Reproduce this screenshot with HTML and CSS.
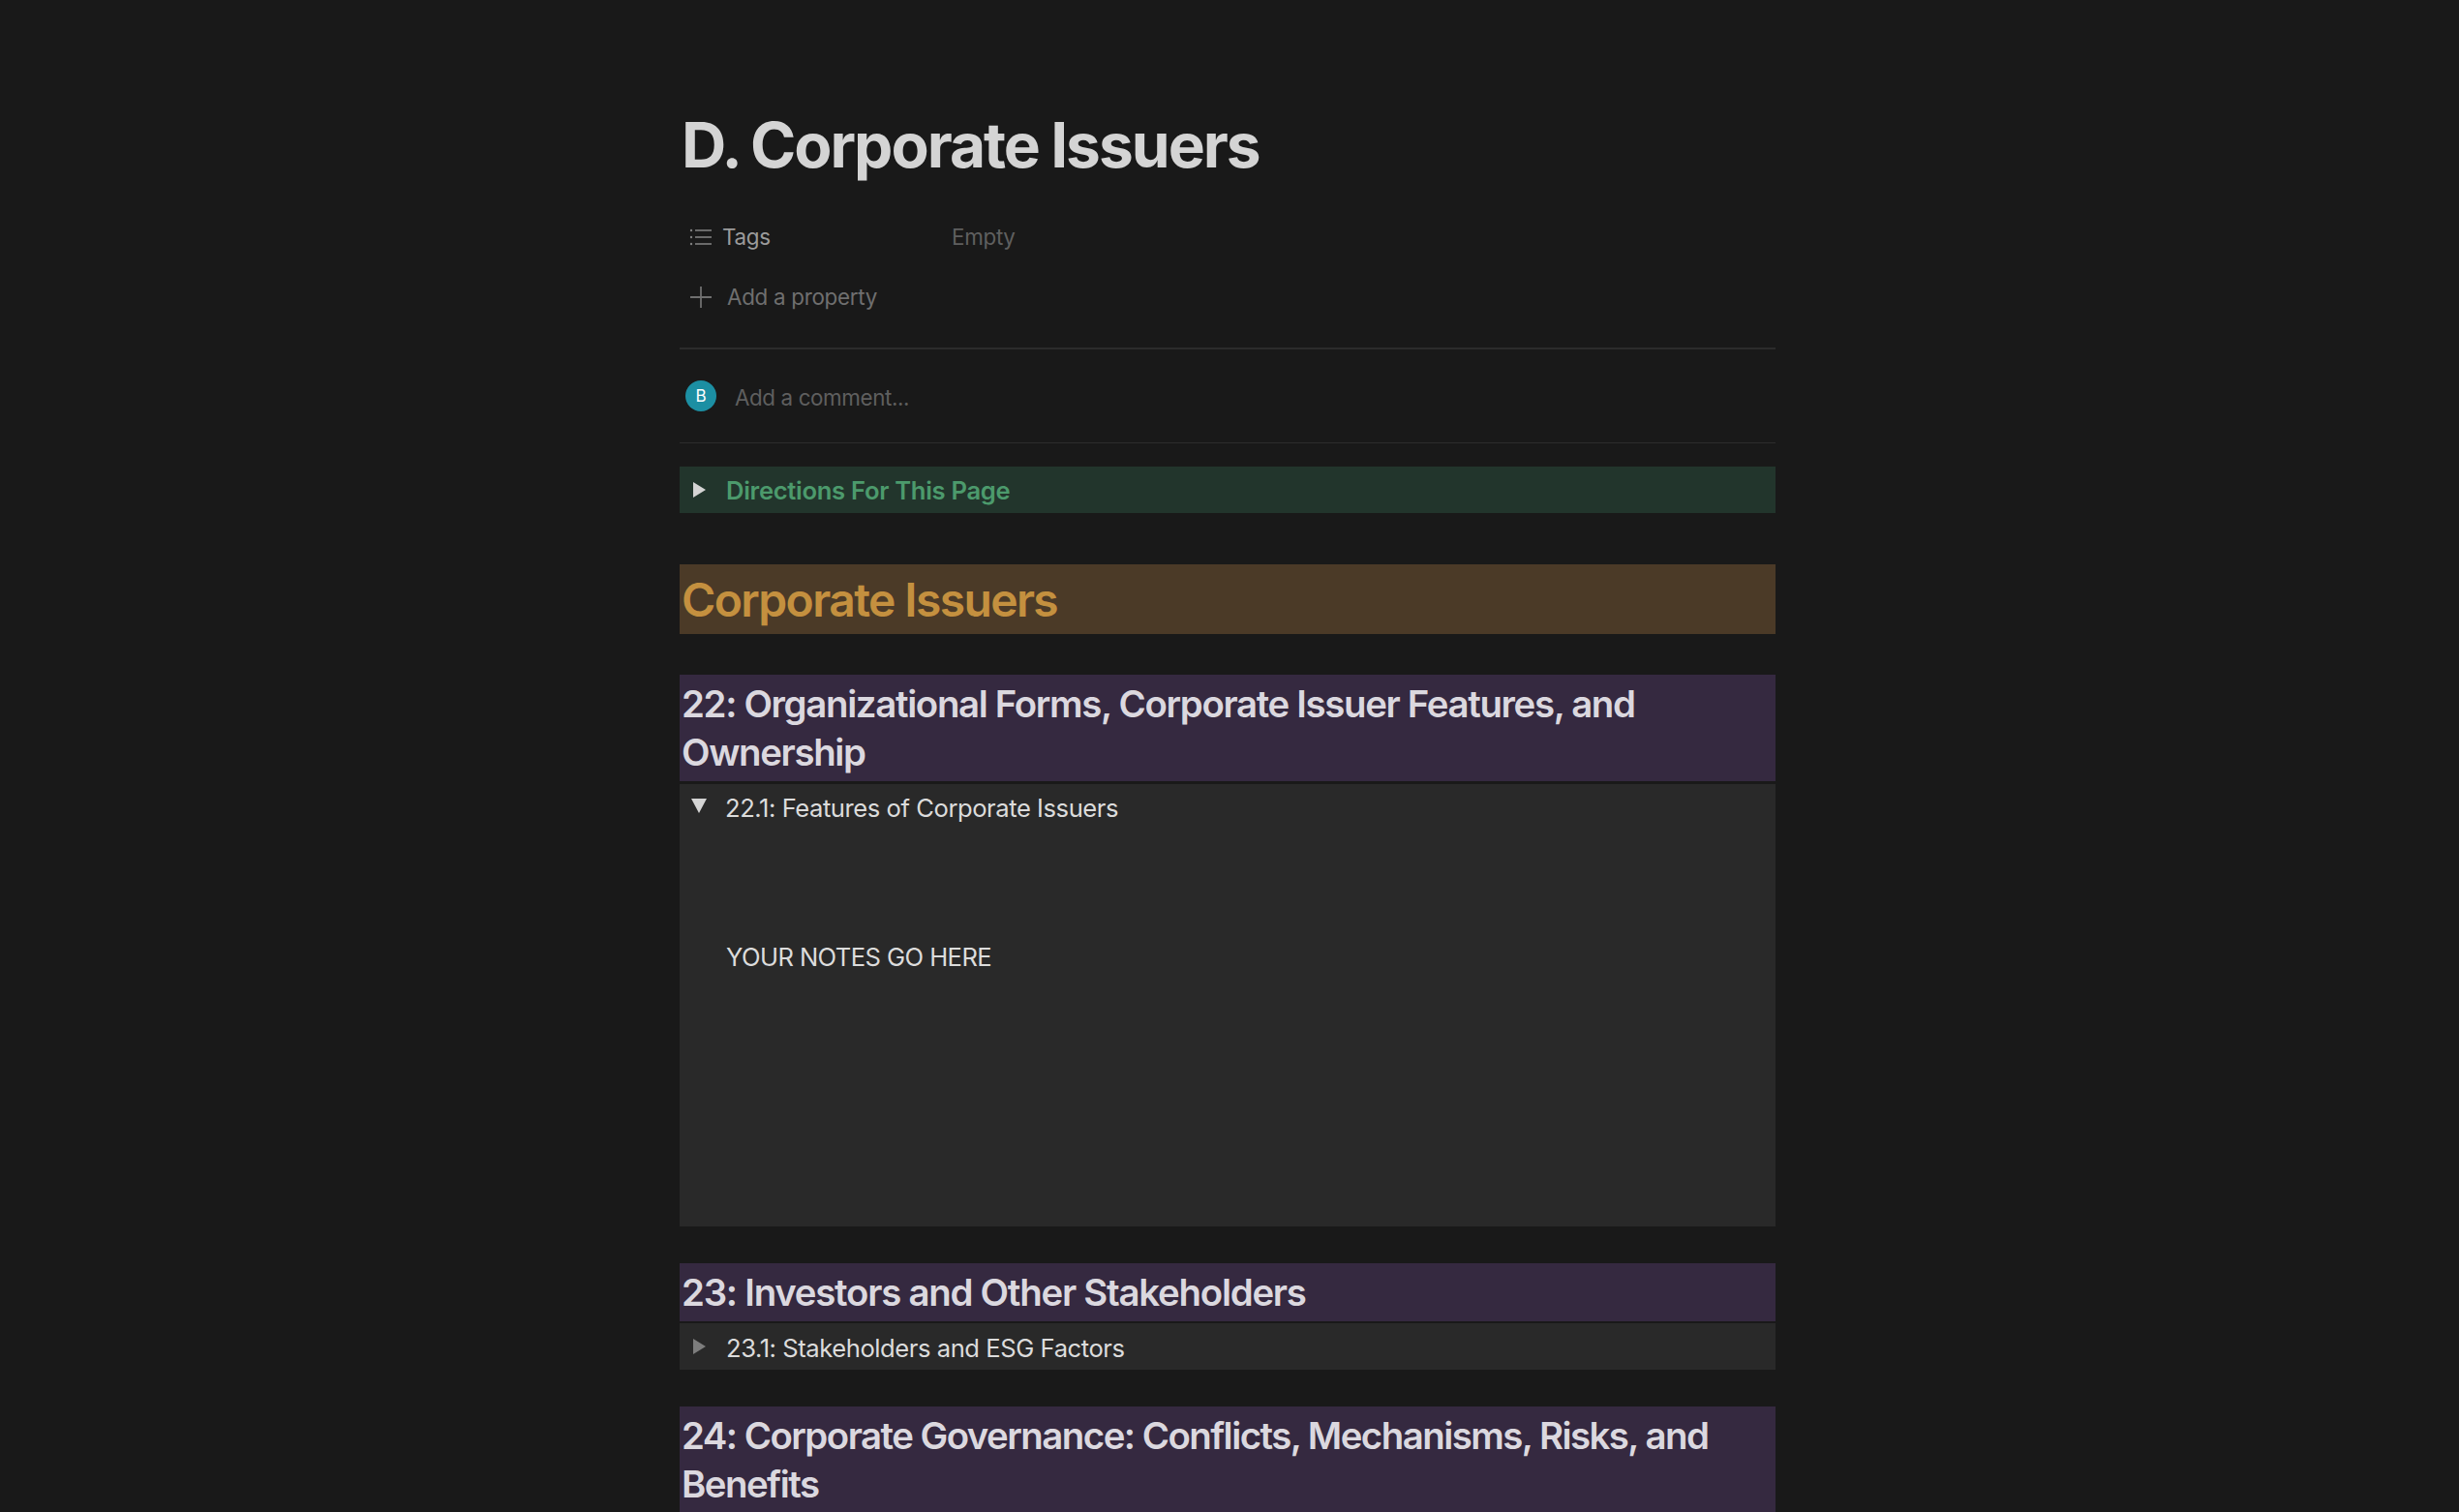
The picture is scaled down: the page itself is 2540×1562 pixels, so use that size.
FILE: index.html
```html
<!DOCTYPE html>
<html lang="en">
<head>
  <meta charset="UTF-8">
  <title>D. Corporate Issuers</title>
  <link rel="stylesheet" href="styles.css">
</head>
<body>
  <div class="page">
    <!-- Page header -->
    <h1 class="page-title">D. Corporate Issuers</h1>

    <div class="property">
      <svg class="prop-icon" viewBox="0 0 24 24" width="24" height="24">
        <g fill="#7f7f7f">
          <circle cx="2" cy="5" r="1.2"/><circle cx="2" cy="12" r="1.2"/><circle cx="2" cy="19" r="1.2"/>
          <rect x="6" y="4.2" width="17" height="1.6"/><rect x="6" y="11.2" width="17" height="1.6"/><rect x="6" y="18.2" width="17" height="1.6"/>
        </g>
      </svg>
      <span class="prop-name">Tags</span>
      <span class="prop-value">Empty</span>
    </div>
    <div class="add-property">
      <svg class="prop-icon" viewBox="0 0 24 24" width="24" height="24">
        <path d="M12 1v22M1 12h22" stroke="#6f6f6f" stroke-width="1.8" fill="none"/>
      </svg>
      <span>Add a property</span>
    </div>

    <!-- Comments -->
    <div class="comment-row">
      <div class="avatar">B</div>
      <span class="comment-text">Add a comment...</span>
    </div>

    <!-- Content -->
    <div class="callout-toggle">
      <span class="tri tri-light"></span>
      <span class="row-label">Directions For This Page</span>
    </div>

    <h1 class="heading-main">Corporate Issuers</h1>

    <h2 class="heading-sec">22: Organizational Forms, Corporate Issuer Features, and Ownership</h2>
    <div class="toggle-block open">
      <div class="toggle-row">
        <span class="tri tri-down"></span>
        <span class="row-label">22.1: Features of Corporate Issuers</span>
      </div>
      <p class="notes">YOUR NOTES GO HERE</p>
    </div>

    <h2 class="heading-sec wide">23: Investors and Other Stakeholders</h2>
    <div class="toggle-block">
      <div class="toggle-row">
        <span class="tri tri-grey"></span>
        <span class="row-label">23.1: Stakeholders and ESG Factors</span>
      </div>
    </div>

    <h2 class="heading-sec tight">24: Corporate Governance: Conflicts, Mechanisms, Risks, and Benefits</h2>
  </div>
</body>
</html>
```

FILE: styles.css
```css
/* General Styles */
html, body {
  height: 100%;
}

body {
  margin: 0;
  overflow: hidden;
  background-color: #191919;
  font-family: 'Inter', sans-serif;
  font-size: 25.6px;
  line-height: 1.5;
  color: #dcdcdc;
}

.page {
  width: 1132px;
  margin-left: 702px;
}

/* Page header */
.page-title {
  margin: 0;
  padding: 106px 2px 0;
  font-size: 64px;
  font-weight: 700;
  line-height: 88px;
  letter-spacing: -2px;
  word-spacing: -1px;
  color: #d4d4d4;
}

.property, .add-property {
  display: flex;
  align-items: center;
  font-size: 22.4px;
  letter-spacing: -0.3px;
  height: 48px;
}

.property {
  margin-top: 27px;
}

.add-property {
  margin-top: 14px;
  padding-bottom: 28px;
  border-bottom: 2px solid #2c2c2c;
  color: #7a7a7a;
}

.prop-icon {
  margin-left: 10px;
  flex-shrink: 0;
}

.prop-name {
  margin-left: 10px;
  width: 237px;
  color: #9b9b9b;
}

.prop-value {
  color: #5f5f5f;
}

.add-property span {
  margin-left: 15px;
  color: #6f6f6f;
}

.comment-row {
  display: flex;
  align-items: center;
  height: 96px;
  border-bottom: 1px solid #2c2c2c;
  font-size: 22.4px;
  letter-spacing: -0.4px;
  color: #5f5f5f;
}

.comment-text {
  padding-top: 3px;
}

.avatar {
  width: 32px;
  height: 32px;
  margin-left: 6px;
  margin-right: 19px;
  margin-top: -1px;
  border-radius: 50%;
  background-color: #1c8fa3;
  color: #fff;
  font-size: 17px;
  letter-spacing: 0;
  line-height: 32px;
  text-align: center;
}

/* Toggle triangles */
.tri {
  display: block;
  width: 0;
  height: 0;
  margin-left: 14px;
  margin-right: 21px;
  flex-shrink: 0;
  border-style: solid;
  border-width: 8px 0 8px 13px;
  border-color: transparent transparent transparent #d4d4d4;
}

.tri-grey {
  border-left-color: #7d7d7d;
}

.tri-down {
  margin-left: 12px;
  margin-right: 19px;
  margin-top: -2px;
  border-width: 15px 8px 0 8px;
  border-color: #d4d4d4 transparent transparent transparent;
}

/* Blocks */
.row-label {
  padding-top: 3px;
  letter-spacing: -0.45px;
}

.callout-toggle {
  display: flex;
  align-items: center;
  height: 48px;
  margin-top: 24px;
  background-color: #22352c;
  color: #4c9a6c;
  font-weight: 600;
}

.callout-toggle .row-label {
  letter-spacing: -0.3px;
}

.heading-main {
  margin: 53px 0 0;
  padding: 6px 2px 3.6px;
  background-color: #4b3a27;
  color: #c4903f;
  font-size: 48px;
  font-weight: 600;
  line-height: 1.3;
  letter-spacing: -1.62px;
}

.heading-sec {
  margin: 37.5px 0 0;
  padding: 6px 2px 4px;
  background-color: #352940;
  color: #dbd8df;
  font-size: 38.4px;
  font-weight: 600;
  line-height: 1.3;
  letter-spacing: -1.34px;
}

.heading-sec.wide {
  letter-spacing: -1.25px;
}

.heading-sec.tight {
  letter-spacing: -1.53px;
}

.heading-main + .heading-sec {
  margin-top: 42px;
}

.toggle-block {
  margin-top: 2.5px;
  background-color: #292929;
}

.toggle-block.open {
  margin-top: 3px;
  height: 457.5px;
}

.toggle-row {
  display: flex;
  align-items: center;
  height: 48px;
}

.notes {
  margin: 112px 0 0 48px;
  letter-spacing: -0.58px;
}
```
